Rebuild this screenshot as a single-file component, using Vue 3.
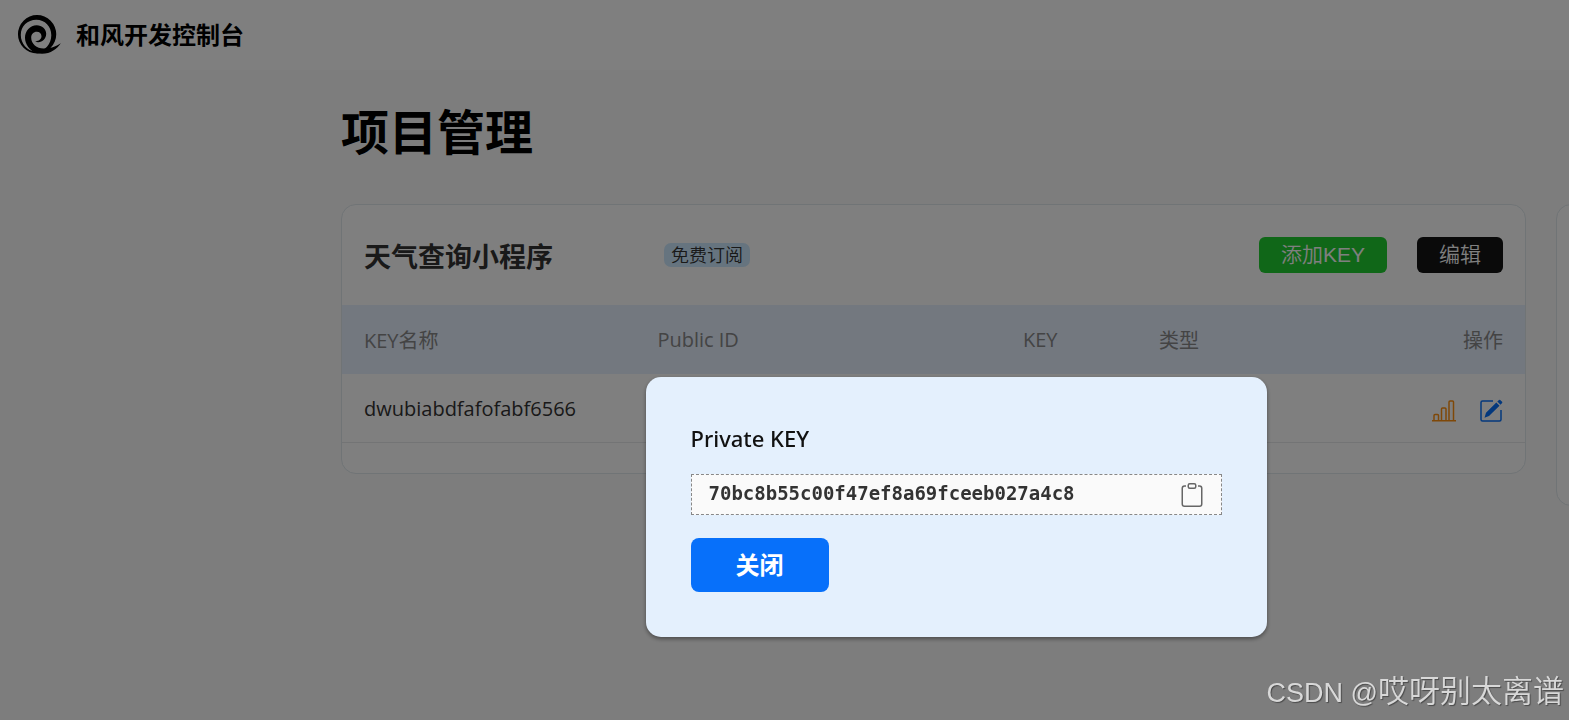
<template>
  <div class="console">
    <header class="topbar">
      <svg class="logo" viewBox="0 0 45 40" fill="#000">
        <path fill-rule="evenodd" d="M20 0a19 19 0 1 1 0 38.500A19 19.200 0 0 1 20 0zM19.300 4.800C10.500 4.800 3.800 11.200 3.800 20c0 8.500 6.200 16 14.700 16.600C27.500 37 34.300 29.500 34.300 20.300 34.300 11.500 28 4.800 19.300 4.800z"/>
        <path d="M20 38.300C12.500 35.500 8 29.300 8 22.700 8 15.800 13 10.200 19.700 10.200c5.300 0 9.500 3.700 9.500 8.600 0 4.800-3.600 8.400-8 8.400-1.300 0-2.300-.3-3-.9 3.700-.1 6.300-2 6.300-5 0-2.700-2-4.500-4.700-4.500-3.300 0-5.600 2.500-5.600 6 0 6.200 5.600 10.700 12.300 10.700 6.500 0 12.500-1.800 17.300-5.300C40.300 33.800 33.500 38.700 25 38.700c-2 0-3.600-.1-5-.4z"/>
      </svg>
      <span class="brand">和风开发控制台</span>
    </header>

    <main class="content">
      <h1 class="page-title">项目管理</h1>

      <div class="projects">
        <section class="card">
          <div class="card-header">
            <h2 class="project-name">天气查询小程序</h2>
            <span class="plan">免费订阅</span>
            <div class="card-actions">
              <button class="btn btn-add">添加KEY</button>
              <button class="btn btn-edit">编辑</button>
            </div>
          </div>

          <table class="key-table">
            <thead>
              <tr>
                <th class="col-name">KEY名称</th>
                <th class="col-id">Public ID</th>
                <th class="col-key">KEY</th>
                <th>类型</th>
                <th class="col-ops">操作</th>
              </tr>
            </thead>
            <tbody>
              <tr v-for="item in keys" :key="item.name">
                <td>{{ item.name }}</td>
                <td></td>
                <td></td>
                <td></td>
                <td class="col-ops">
                  <div class="ops">
                    <button class="icon-btn stats" aria-label="统计">
                      <svg width="24" height="24" viewBox="0 0 24 24" fill="none" stroke="currentColor" stroke-width="1.500">
                        <path d="M0 21.800h24M2 21.500v-5q0-1 1-1h2.500q1 0 1 1v5M9.500 21.500V10q0-1 1-1H13q1 0 1 1v11.500M17 21.500V3q0-1 1-1h2.500q1 0 1 1v18.500"/>
                      </svg>
                    </button>
                    <button class="icon-btn edit" aria-label="编辑">
                      <svg width="24" height="24" viewBox="0 0 24 24" fill="none" stroke="currentColor">
                        <path d="M14 2H3.500A1.500 1.500 0 0 0 2 3.500v17A1.500 1.500 0 0 0 3.500 22h17a1.500 1.500 0 0 0 1.500-1.500V11" stroke-width="1.500"/>
                        <path d="M17.300 3.500l3.200 3.200L10 17l-4.500 1.700L7 13.800zM18.300 2.500l1.700-1.600q.6-.5 1.200 0l1.900 1.900q.5.600 0 1.200l-1.600 1.700z" fill="currentColor" stroke="none"/>
                      </svg>
                    </button>
                  </div>
                </td>
              </tr>
            </tbody>
          </table>
        </section>

        <section class="card card-next"></section>
      </div>
    </main>

    <div v-if="showKey" class="overlay">
      <div class="dialog" role="dialog" aria-labelledby="key-title">
        <h3 id="key-title" class="dialog-title">Private KEY</h3>
        <div class="key-box">
          <code>{{ privateKey }}</code>
          <button class="icon-btn copy" aria-label="复制" @click="copyKey">
            <svg width="24" height="24" viewBox="0 0 16 16" fill="currentColor">
              <path d="M4 1.500H3a2 2 0 0 0-2 2V14a2 2 0 0 0 2 2h10a2 2 0 0 0 2-2V3.500a2 2 0 0 0-2-2h-1v1h1a1 1 0 0 1 1 1V14a1 1 0 0 1-1 1H3a1 1 0 0 1-1-1V3.500a1 1 0 0 1 1-1h1v-1z"/>
              <path d="M9.500 1a.5.500 0 0 1 .5.500v1a.5.500 0 0 1-.5.500h-3a.5.500 0 0 1-.5-.500v-1a.5.500 0 0 1 .5-.500h3zm-3-1A1.500 1.500 0 0 0 5 1.500v1A1.500 1.500 0 0 0 6.500 4h3A1.500 1.500 0 0 0 11 2.500v-1A1.500 1.500 0 0 0 9.500 0h-3z"/>
            </svg>
          </button>
        </div>
        <button class="btn-close" @click="showKey = false">关闭</button>
      </div>
    </div>

    <div class="watermark"><span>CSDN @</span>哎呀别太离谱</div>
  </div>
</template>

<script setup>
import { ref } from 'vue'

const keys = [{ name: 'dwubiabdfafofabf6566' }]
const privateKey = '70bc8b55c00f47ef8a69fceeb027a4c8'
const showKey = ref(true)

function copyKey() {
  navigator.clipboard?.writeText(privateKey)
}
</script>

<style>
body {
  background: #fafafa;
  overflow: hidden;
}
</style>

<style scoped>
.console {
  min-height: 100vh;
  font-family: "Open Sans", "Noto Sans CJK SC", sans-serif;
  color: #333;
}

h1, h2, h3 { margin: 0; }

button {
  border: none;
  font-family: inherit;
  cursor: pointer;
}

/* 顶部栏 */
.topbar {
  display: flex;
  align-items: center;
  gap: 14px;
  height: 70px;
  padding-left: 17px;
  background: #fff;
}
.logo {
  width: 45px;
  height: 40px;
}
.brand {
  font-size: 24px;
  font-weight: 700;
  line-height: 36px;
  color: #000;
}

.content { padding: 27px 0 0 341px; }

.page-title {
  font-size: 48px;
  line-height: 70px;
  color: #000;
}

/* 项目卡片 */
.projects {
  display: flex;
  align-items: flex-start;
  gap: 30px;
  margin-top: 37px;
  overflow: hidden;
}
.card {
  flex: 0 0 auto;
  width: calc(100% - 43px);
  box-sizing: border-box;
  padding-bottom: 30px;
  background: #fff;
  border: 1px solid #e0e8ec;
  border-radius: 15px;
  overflow: hidden;
}
.card-next { height: 302px; }

.card-header {
  display: flex;
  align-items: center;
  height: 100px;
  padding: 0 22px;
}
.project-name {
  flex: 0 0 300px;
  padding-top: 3px;
  font-size: 27px;
  line-height: 40px;
}
.plan {
  padding: 0 7px;
  font-size: 18px;
  font-weight: 350;
  line-height: 24px;
  background: #cce8ff;
  border-radius: 7px;
}
.card-actions {
  display: flex;
  gap: 30px;
  margin-left: auto;
}
.btn {
  height: 36px;
  padding: 0 22px;
  font-family: "Liberation Sans", "Noto Sans CJK SC", sans-serif;
  font-size: 21px;
  font-weight: 350;
  line-height: 36px;
  color: #fff;
  border-radius: 6px;
}
.btn-add { background: #20ce30; }
.btn-edit { background: #141414; }

.key-table {
  width: 100%;
  table-layout: fixed;
  border-collapse: separate;
  border-spacing: 0;
  font-size: 20px;
}
.key-table th,
.key-table td {
  box-sizing: border-box;
  height: 69px;
  padding: 0 22px;
  text-align: left;
  border-bottom: 1px solid #e6e8ea;
}
.key-table th {
  font-weight: 400;
  color: #888;
  background: #e6f0ff;
  border-bottom-color: #e6f0ff;
}
.key-table .col-name { width: 24.8%; }
.key-table .col-id { width: 30.9%; }
.key-table .col-key { width: 11.5%; }
.key-table .col-ops { text-align: right; }

.ops {
  display: flex;
  justify-content: flex-end;
  gap: 23px;
  padding-top: 6px;
}
.icon-btn {
  display: flex;
  padding: 0;
  background: none;
}
.stats { color: #ff9010; }
.edit { color: #0770fa; }
.copy { color: #666; }

/* 私钥弹窗 */
.overlay {
  position: fixed;
  inset: 0;
  display: flex;
  align-items: flex-start;
  justify-content: center;
  padding: 377px 0 0 343px;
  background: rgba(0, 0, 0, 0.5);
}
.dialog {
  width: 621px;
  box-sizing: border-box;
  padding: 45px;
  background: #e4f0fd;
  border-radius: 15px;
  box-shadow: 0 2px 4px rgba(0, 0, 0, 0.4);
}
.dialog-title {
  font-family: "Noto Sans", sans-serif;
  font-size: 22px;
  font-weight: 500;
  line-height: 32px;
  color: #111;
}
.key-box {
  display: flex;
  align-items: center;
  justify-content: space-between;
  height: 39px;
  margin: 20px 0 23px;
  padding: 0 17px;
  background: #fafafa;
  border: 1px dashed #888;
}
.key-box code {
  padding-bottom: 3px;
  font-family: "DejaVu Sans Mono", monospace;
  font-size: 19px;
  font-weight: 700;
}
.btn-close {
  height: 54px;
  padding: 0 45px 4px;
  font-size: 24px;
  font-weight: 700;
  color: #fff;
  background: #0770fa;
  border-radius: 8px;
}

.watermark {
  position: fixed;
  right: 5px;
  bottom: 4px;
  font-family: "Noto Sans CJK SC", sans-serif;
  font-size: 31px;
  font-weight: 350;
  line-height: 46px;
  color: #d8d8d8;
  text-shadow: 1px 1px 1px rgba(0, 0, 0, 0.4);
}
.watermark span {
  font-family: "Liberation Sans", sans-serif;
  font-size: 27px;
}
</style>
